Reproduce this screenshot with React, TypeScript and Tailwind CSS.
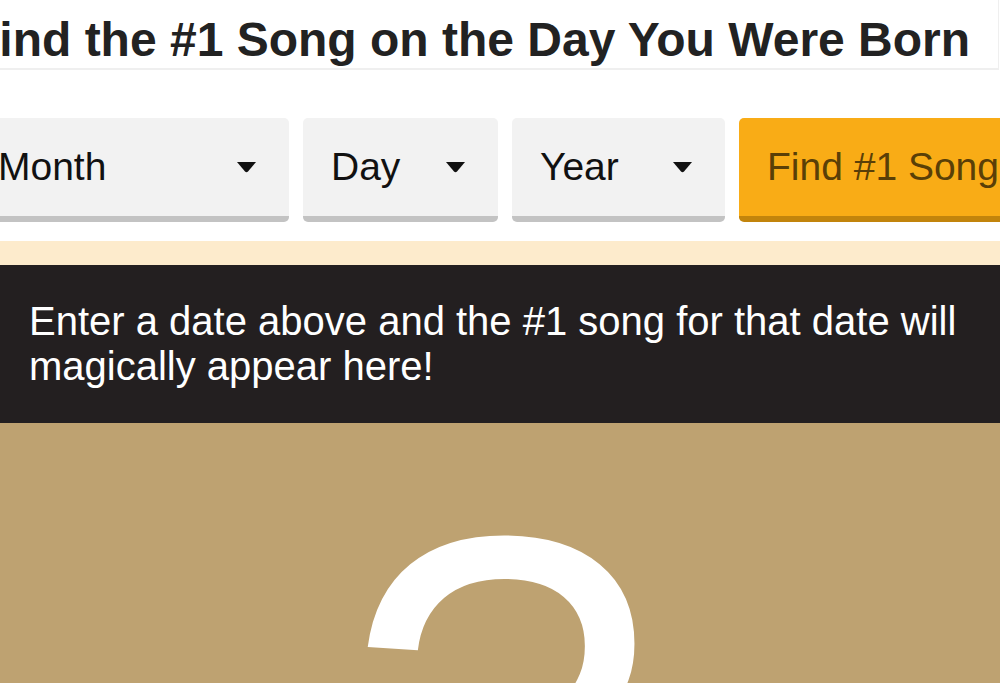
import React from "react";

function Caret() {
  return (
    <svg width="19" height="11" viewBox="0 0 19 11" className="shrink-0">
      <path d="M0 0 H19 L11 9.5 Q9.5 11 8 9.5 Z" fill="#111" />
    </svg>
  );
}

function Picker({ label, width }: { label: string; width: string }) {
  return (
    <div
      className={`${width} flex h-[104px] shrink-0 items-center justify-between rounded-[5px] border-b-[6px] border-[#c3c3c3] bg-[#f2f2f2] pl-[28px] pr-[33px] text-[39px] text-[#111]`}
    >
      <span>{label}</span>
      <Caret />
    </div>
  );
}

export default function App() {
  return (
    <div className="h-[683px] w-[1000px] overflow-hidden bg-white font-['Liberation_Sans',Arial,sans-serif]">
      <div className="-ml-[30px] w-[1060px]">
        <h1 className="w-[1029px] border-b-2 border-r border-[#efefef] pt-[12px] text-[48px] font-bold leading-[56px] text-[#222]">
          Find the #1 Song on the Day You Were Born
        </h1>

        <div className="mt-[48px] flex gap-[14px]">
          <Picker label="Month" width="w-[319px]" />
          <Picker label="Day" width="w-[195px]" />
          <Picker label="Year" width="w-[213px]" />
          <button className="h-[104px] w-[300px] shrink-0 rounded-[5px] border-b-[6px] border-[#c2840c] bg-[#f9ac16] pl-[28px] text-left text-[39px] text-[#5a3f07]">
            Find #1 Song
          </button>
        </div>

        <div className="mt-[19px] h-[24px] bg-[#fdebcc]" />
      </div>

      <div className="bg-[#231f20] px-[29px] pb-[34px] pt-[34px] text-[40px] leading-[45px] text-white">
        Enter a date above and the #1 song for that date will magically appear here!
      </div>

      <div className="flex h-[300px] justify-center bg-[#bea271] pt-[30px]">
        <span className="text-[558px] leading-none text-white">?</span>
      </div>
    </div>
  );
}
